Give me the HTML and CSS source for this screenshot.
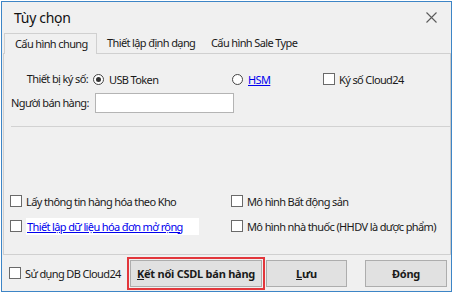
FILE: index.html
```html
<!DOCTYPE html>
<html lang="vi">
<head>
    <meta charset="UTF-8">
    <title>Tùy chọn</title>
    <link rel="stylesheet" href="styles.css">
</head>
<body>
<div class="window">
    <div class="titlebar">
        <span class="title">Tùy chọn</span>
        <svg class="close" width="11" height="11" viewBox="0 0 11 11">
            <path d="M0.5 0.5L10.5 10.5M10.5 0.5L0.5 10.5" stroke="#5a5a5a" stroke-width="1.1" fill="none"/>
        </svg>
    </div>

    <div class="tabs">
        <div class="tab active">Cấu hình chung</div>
        <div class="tab">Thiết lập định dạng</div>
        <div class="tab">Cấu hình Sale Type</div>
    </div>

    <div class="panel">
        <div class="form">
            <div class="lbl">Thiết bị ký số:</div>
            <div class="opts">
                <span class="opt opt-usb"><i class="radio on"></i>USB Token</span>
                <span class="opt opt-hsm"><i class="radio"></i><a class="link">HSM</a></span>
                <span class="opt"><i class="check"></i>Ký số Cloud24</span>
            </div>
            <div class="lbl">Người bán hàng:</div>
            <div><div class="input"></div></div>
        </div>

        <div class="sep"></div>

        <div class="options">
            <span class="opt"><i class="check"></i>Lấy thông tin hàng hóa theo Kho</span>
            <span class="opt"><i class="check"></i>Mô hình Bất động sản</span>
            <span class="opt"><i class="check"></i><a class="link hl">Thiết lập dữ liệu hóa đơn mở rộng</a></span>
            <span class="opt"><i class="check"></i>Mô hình nhà thuốc (HHDV là dược phẩm)</span>
        </div>
    </div>

    <div class="footer">
        <span class="opt opt-db"><i class="check"></i>Sử dụng DB Cloud24</span>
        <div class="focus">
            <button class="btn btn-wide"><u>K</u>ết nối CSDL bán hàng</button>
        </div>
        <button class="btn btn-save"><u>L</u>ưu</button>
        <button class="btn btn-close">Đón<u>g</u></button>
    </div>
</div>
</body>
</html>
```

FILE: styles.css
```css
* {
    margin: 0;
    padding: 0;
    box-sizing: border-box;
}

body {
    background: #ffffff;
    font-family: 'Noto Sans', sans-serif;
    font-size: 11px;
    letter-spacing: -0.62px;
    color: #1a1a1a;
}

/* khung cửa sổ */
.window {
    width: 451px;
    height: 291px;
    margin: 1px 0 0 1px;
    border: 1px solid #3d85c6;
    background: #f0f0f0;
    display: flex;
    flex-direction: column;
}

.titlebar {
    height: 31px;
    padding: 0 14px 0 12px;
    display: flex;
    align-items: center;
    justify-content: space-between;
}

.title {
    font-size: 14px;
    letter-spacing: -0.3px;
    color: #111;
}

/* tabs */
.tabs {
    height: 20px;
    display: flex;
    padding-left: 2px;
    position: relative;
    z-index: 1;
}

.tab {
    height: 20px;
    line-height: 19px;
    padding-left: 10px;
    white-space: nowrap;
}

.tab.active {
    width: 93px;
    height: 21px;
    border: 1px solid #d0d0d0;
    border-bottom: none;
    background: #f0f0f0;
    padding-left: 10px;
}

.tab:nth-child(2) { width: 104px; }

.panel {
    height: 202px;
    margin-left: 1px;
    border: 1px solid #d0d0d0;
    border-right-color: #c8c8c8;
}

.form {
    display: grid;
    grid-template-columns: 77px 1fr;
    grid-template-rows: 20px 20px;
    column-gap: 5px;
    row-gap: 4px;
    padding: 15px 0 0 7px;
}

.lbl {
    text-align: right;
    line-height: 20px;
    white-space: nowrap;
}

.opts {
    display: flex;
    align-items: center;
}

.opt {
    display: flex;
    align-items: center;
    white-space: nowrap;
}

.opt-usb { width: 139px; }
.opt-hsm { width: 91px; }

.radio {
    width: 11px;
    height: 11px;
    border: 1px solid #444;
    border-radius: 50%;
    background: #fff;
    margin-right: 5px;
    position: relative;
}

.radio.on::after {
    content: '';
    position: absolute;
    left: 2px;
    top: 2px;
    width: 5px;
    height: 5px;
    border-radius: 50%;
    background: #333;
}

.check {
    width: 12px;
    height: 12px;
    border: 1px solid #6a6a6a;
    background: #fff;
    margin-right: 4px;
    flex: none;
}

.link {
    color: #0000ee;
    text-decoration: underline;
}

.link.hl {
    background: #fff;
    line-height: 17px;
    padding: 0 4px 0 1px;
    width: 173px;
}

.input {
    width: 139px;
    height: 20px;
    margin-left: 2px;
    background: #fff;
    border: 1px solid #b4b4b4;
}

.sep {
    height: 1px;
    background: #d2d2d2;
    margin: 13px 0 0 7px;
}

.options {
    display: grid;
    grid-template-columns: 221px 1fr;
    grid-auto-rows: 20px;
    row-gap: 5px;
    padding: 64px 0 0 6px;
}

/* nút dưới cùng */
.footer {
    flex: 1;
    display: flex;
    align-items: center;
    padding-left: 7px;
}

.opt-db { width: 118px; }

.focus {
    border: 2px solid #e2363b;
    padding: 1px;
    margin-right: 1px;
}

.btn {
    font-family: inherit;
    font-size: 11px;
    font-weight: bold;
    letter-spacing: -0.25px;
    color: #1a1a1a;
    height: 27px;
    background: #e1e1e1;
    border: 1px solid #adadad;
}

.btn-wide { width: 132px; display: block; }
.btn-save { width: 81px; }
.btn-close { width: 82px; margin-left: 18px; }
```
